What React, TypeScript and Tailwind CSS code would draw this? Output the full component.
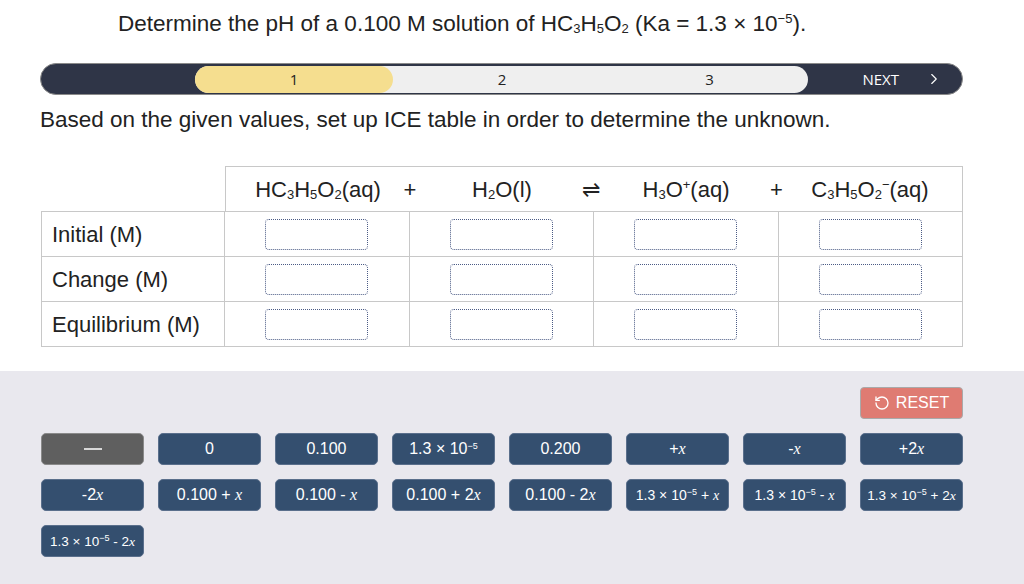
import React, { ReactNode } from "react";
import { RotateCcw, ChevronRight } from "lucide-react";

const arial = "font-['Liberation_Sans',Arial,sans-serif]";

function Sub({ children }: { children: ReactNode }) {
  return <span className="text-[13px] align-[-2px]">{children}</span>;
}

function Sup({ children }: { children: ReactNode }) {
  return <span className="text-[13px] align-[8px]">{children}</span>;
}

function X() {
  return <span className="font-['Liberation_Serif',serif] italic">x</span>;
}

function E5() {
  return <span className="text-[9px] align-[5px]">−5</span>;
}

function Blank() {
  return (
    <div className="w-[103px] h-[31px] rounded-[4px] border border-dotted border-[#4b5b85] bg-white" />
  );
}

function Op({ children }: { children: ReactNode }) {
  return <div className="w-0 flex justify-center whitespace-nowrap">{children}</div>;
}

function Species({ children }: { children: ReactNode }) {
  return (
    <div className="flex-1 flex justify-center whitespace-nowrap">
      <span>{children}</span>
    </div>
  );
}

const rows = ["Initial (M)", "Change (M)", "Equilibrium (M)"];

const tiles: ReactNode[] = [
  <>0</>,
  <>0.100</>,
  <>1.3 × 10<E5 /></>,
  <>0.200</>,
  <>+<X /></>,
  <>-<X /></>,
  <>+2<X /></>,
  <>-2<X /></>,
  <>0.100 + <X /></>,
  <>0.100 - <X /></>,
  <>0.100 + 2<X /></>,
  <>0.100 - 2<X /></>,
  <span className="text-[14px]">1.3 × 10<E5 /> + <X /></span>,
  <span className="text-[14px]">1.3 × 10<E5 /> - <X /></span>,
  <span className="text-[13.5px]">1.3 × 10<E5 /> + 2<X /></span>,
  <span className="text-[13.5px]">1.3 × 10<E5 /> - 2<X /></span>,
];

export default function App() {
  return (
    <div className={`w-[1024px] h-[584px] bg-white overflow-hidden flex flex-col text-[#222] ${arial}`}>
      {/* question */}
      <div className="pl-[118px] pt-[6px] h-[32px] text-[22.5px] leading-[26px]">
        Determine the pH of a 0.100 M solution of HC<Sub>3</Sub>H<Sub>5</Sub>O<Sub>2</Sub> (Ka = 1.3 × 10<Sup>−5</Sup>).
      </div>

      {/* step bar */}
      <div className="mt-[31px] ml-[40px] mr-[61px] h-[32px] rounded-full bg-[#2f3547] border border-[#8a8a8a] flex items-center font-['Open_Sans',sans-serif] text-[15px] overflow-hidden">
        <div className="w-[154px]" />
        <div className="w-[613px] h-[27px] rounded-full bg-[#efefef] flex text-[#222]">
          <div className="w-[198px] h-full rounded-full bg-[#f5de8f] flex items-center justify-center">1</div>
          <div className="w-[218px] flex items-center justify-center">2</div>
          <div className="w-[197px] flex items-center justify-center">3</div>
        </div>
        <div className="flex-1 flex items-center justify-end pr-[19px] text-white">
          <span className="mr-[26px]">NEXT</span>
          <ChevronRight size={18} strokeWidth={1.5} />
        </div>
      </div>

      <div className="pl-[40px] mt-[12px] h-[26px] text-[22.5px] leading-[26px]">
        Based on the given values, set up ICE table in order to determine the unknown.
      </div>

      {/* ICE table */}
      <div className="mt-[33px] ml-[41px] mr-[61px] text-[22px]">
        <div className="flex">
          <div className="w-[184px]" />
          <div className="flex-1 h-[45px] border-t border-x border-[#c8c8c8] flex items-center">
            <Species>HC<Sub>3</Sub>H<Sub>5</Sub>O<Sub>2</Sub>(aq)</Species>
            <Op>+</Op>
            <Species>H<Sub>2</Sub>O(l)</Species>
            <Op><span className="-ml-[6px]">⇌</span></Op>
            <Species>H<Sub>3</Sub>O<Sup>+</Sup>(aq)</Species>
            <Op><span className="-ml-[3px]">+</span></Op>
            <Species>C<Sub>3</Sub>H<Sub>5</Sub>O<Sub>2</Sub><Sup>−</Sup>(aq)</Species>
          </div>
        </div>
        <div className="border-t border-l border-[#c8c8c8]">
          {rows.map((r) => (
            <div key={r} className="flex h-[45px] border-b border-[#c8c8c8]">
              <div className="w-[183px] pl-[10px] flex items-center border-r border-[#c8c8c8]">{r}</div>
              {[0, 1, 2, 3].map((c) => (
                <div key={c} className="flex-1 flex items-center justify-center border-r border-[#c8c8c8]">
                  <Blank />
                </div>
              ))}
            </div>
          ))}
        </div>
      </div>

      {/* answer tiles */}
      <div className="mt-[24px] flex-1 bg-[#e9e8ee] pt-[16px] pl-[41px] pr-[61px]">
        <div className="flex justify-end">
          <button className="w-[103px] h-[32px] rounded-[4px] bg-[#df7b72] border border-[#a9a9a9] text-white text-[16px] flex items-center justify-center gap-[6px]">
            <RotateCcw size={16} strokeWidth={2} />
            RESET
          </button>
        </div>
        <div className="mt-[14px] grid grid-cols-[repeat(8,103px)] gap-x-[14px] gap-y-[14px] text-[16px] text-white">
          <div className="h-[32px] rounded-[5px] bg-[#5f5f5f] border border-[#8a8a8a] flex items-center justify-center">
            <div className="w-[18px] h-[2px] bg-[#d8d8d8]" />
          </div>
          {tiles.map((t, i) => (
            <div
              key={i}
              className="h-[32px] rounded-[5px] bg-[#344f6f] border border-[#5a6f8c] flex items-center justify-center whitespace-nowrap"
            >
              <span>{t}</span>
            </div>
          ))}
        </div>
      </div>
    </div>
  );
}
